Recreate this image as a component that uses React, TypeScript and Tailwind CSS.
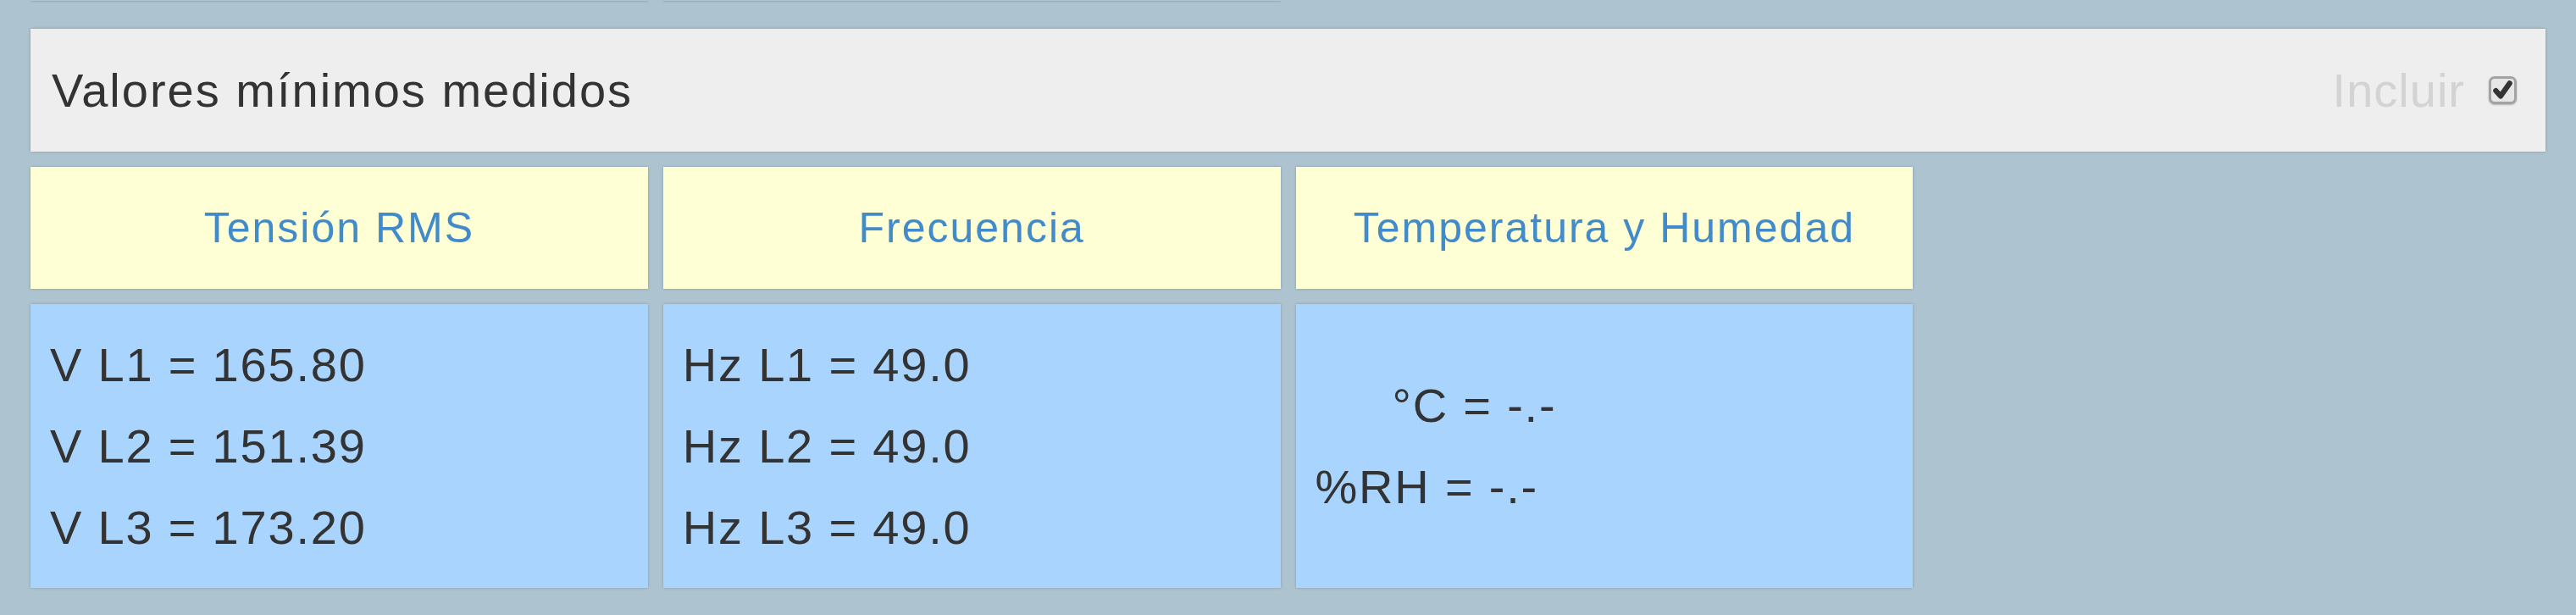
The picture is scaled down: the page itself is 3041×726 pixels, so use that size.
const valueFont = "font-['Liberation_Sans',Arial,sans-serif]";

function Checkbox() {
  return (
    <span className="flex h-[33px] w-[33px] items-center justify-center rounded-[7px] border-[3px] border-[#a3a3a3] bg-[#e6e6e6] shadow-[0_1px_2px_rgba(0,0,0,0.25)]">
      <svg viewBox="0 0 20 20" className="h-[25px] w-[25px]">
        <path d="M3.5 10.5 L8 15.5 L16.5 3.5" fill="none" stroke="#333" strokeWidth="5" strokeLinecap="round" strokeLinejoin="round" />
      </svg>
    </span>
  );
}

function TitleCard({ title }: { title: string }) {
  return (
    <div className="flex h-[144px] items-center justify-center bg-[#ffffd6] text-[50px] tracking-[2px] text-[#428bca] shadow-[0_0_3px_rgba(0,0,0,0.22)]">
      {title}
    </div>
  );
}

function ValueCard({ children }: { children: React.ReactNode }) {
  return (
    <div className="flex h-[335px] flex-col justify-center bg-[#a8d4fe] px-[23px] text-[56px] leading-[96px] tracking-[1.8px] text-[#333] shadow-[0_0_3px_rgba(0,0,0,0.22)]">
      {children}
    </div>
  );
}

export default function App() {
  return (
    <div className={`h-[726px] w-full overflow-hidden bg-[#adc4d0] px-[36px] ${valueFont}`}>
      <div className="grid grid-cols-4 gap-x-[18px]">
        <div className="h-[1px] shadow-[0_1px_2px_rgba(0,0,0,0.2)]" />
        <div className="h-[1px] shadow-[0_1px_2px_rgba(0,0,0,0.2)]" />
      </div>

      <div className="mt-[33px] flex h-[145px] items-center justify-between bg-[#eeeeee] pl-[25px] pr-[34px] shadow-[0_0_3px_rgba(0,0,0,0.25)]">
        <span className="text-[56px] tracking-[2px] text-[#333]">Valores mínimos medidos</span>
        <div className="flex items-center gap-[28px]">
          <span className="text-[56px] tracking-[1px] text-[#d3d3d3]">Incluir</span>
          <Checkbox />
        </div>
      </div>

      <div className="mt-[18px] grid grid-cols-4 gap-[18px]">
        <TitleCard title="Tensión RMS" />
        <TitleCard title="Frecuencia" />
        <TitleCard title="Temperatura y Humedad" />
        <div />

        <ValueCard>
          <div>V L1 = 165.80</div>
          <div>V L2 = 151.39</div>
          <div>V L3 = 173.20</div>
        </ValueCard>
        <ValueCard>
          <div>Hz L1 = 49.0</div>
          <div>Hz L2 = 49.0</div>
          <div>Hz L3 = 49.0</div>
        </ValueCard>
        <ValueCard>
          <div className="pl-[91px]">°C = -.-</div>
          <div>%RH = -.-</div>
        </ValueCard>
        <div />
      </div>
    </div>
  );
}
